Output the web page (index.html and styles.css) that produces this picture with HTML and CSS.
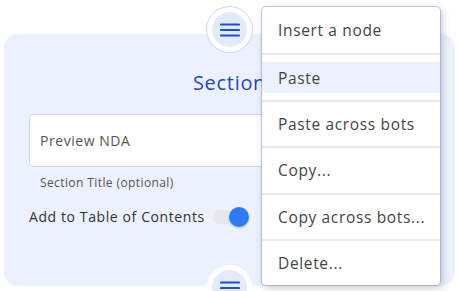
FILE: index.html
```html
<!DOCTYPE html>
<html>
<head>
<meta charset="utf-8">
<link rel="stylesheet" href="styles.css">
</head>
<body>
<div class="stage">
  <div class="card">
    <h2 class="title">Section</h2>
    <div class="field">
      <div class="input">Preview NDA</div>
      <div class="hint">Section Title (optional)</div>
    </div>
    <div class="toc">
      <span class="toc-label">Add to Table of Contents</span>
      <span class="toggle"><span class="knob"></span></span>
    </div>
  </div>
  <button class="node-btn top" aria-label="menu">
    <svg width="20" height="14" viewBox="0 0 20 14"><path d="M1 1.5h18M1 7h18M1 12.5h18" stroke="#1f4fd1" stroke-width="2.2" stroke-linecap="round"/></svg>
  </button>
  <button class="node-btn bottom" aria-label="menu">
    <svg width="20" height="14" viewBox="0 0 20 14"><path d="M1 1.5h18M1 7h18M1 12.5h18" stroke="#1f4fd1" stroke-width="2.2" stroke-linecap="round"/></svg>
  </button>
  <ul class="menu">
    <li class="item">Insert a node</li>
    <li class="item active"><span class="hl">Paste</span></li>
    <li class="item">Paste across bots</li>
    <li class="item">Copy...</li>
    <li class="item">Copy across bots...</li>
    <li class="item">Delete...</li>
  </ul>
</div>
</body>
</html>
```

FILE: styles.css
```css
* { box-sizing: border-box; }
html, body { margin: 0; padding: 0; background: #fff; }
body { font-family: "Open Sans", "DejaVu Sans", sans-serif; overflow: hidden; }
.stage { position: relative; width: 459px; height: 291px; padding: 34px 4px 0 4px; overflow: hidden; }
.card {
  width: 451px; height: 252px;
  background: #ebf1fd;
  border-radius: 14px;
  padding: 36px 25px 0 25px;
  display: flex; flex-direction: column;
}
.title {
  margin: 0; text-align: center;
  font-size: 20px; font-weight: 400; color: #2546c4;
  line-height: 26px; letter-spacing: 0.7px;
}
.field { margin-top: 18px; }
.input {
  height: 53px; background: #fff;
  border: 1px solid #d2d5dc; border-radius: 4px;
  padding: 0 10px; display: flex; align-items: center;
  font-size: 14px; color: #555; letter-spacing: 0.55px;
}
.hint { margin: 8px 0 0 11px; font-size: 12px; color: #555; line-height: 16px; letter-spacing: 0.4px; }
.toc { margin-top: 17px; display: flex; align-items: center; gap: 8px; }
.toc-label { font-size: 14px; color: #333; line-height: 18px; letter-spacing: 0.6px; }
.toggle { position: relative; width: 32px; height: 14px; border-radius: 7px; background: #e4e7ec; }
.knob {
  position: absolute; right: -4px; top: -3px;
  width: 20px; height: 20px; border-radius: 50%;
  background: #2d7cf6; box-shadow: 0 1px 2px rgba(0,0,0,.2);
}
.node-btn {
  position: absolute; left: 207px;
  width: 45px; height: 45px; border-radius: 50%;
  background: #e3ebfb; border: 5px solid #fff; padding: 0;
  display: flex; align-items: center; justify-content: center;
  box-shadow: 0 0 0 1px #cbd9f6;
}
.node-btn.top { top: 7px; }
.node-btn.bottom { top: 265px; box-shadow: none; }
.menu {
  position: absolute; left: 262px; top: 7px;
  width: 178px; margin: 0; padding: 0; list-style: none;
  background: #fff; border-radius: 4px;
  box-shadow: 0 0 0 1px rgba(110,145,225,.45), 2px 3px 8px rgba(0,0,0,.22);
}
.item {
  height: 46.4px; display: flex; align-items: center;
  padding: 0 6px 0 16px; font-size: 15.5px; color: #444; letter-spacing: 0.65px;
  border-top: 2px solid #e9e9ec; white-space: nowrap;
}
.item:first-child { border-top: none; }
.item.active { padding: 7px 0; }
.hl { flex: 1; height: 100%; background: #ebf1fd; display: flex; align-items: center; padding: 0 16px; }
```
